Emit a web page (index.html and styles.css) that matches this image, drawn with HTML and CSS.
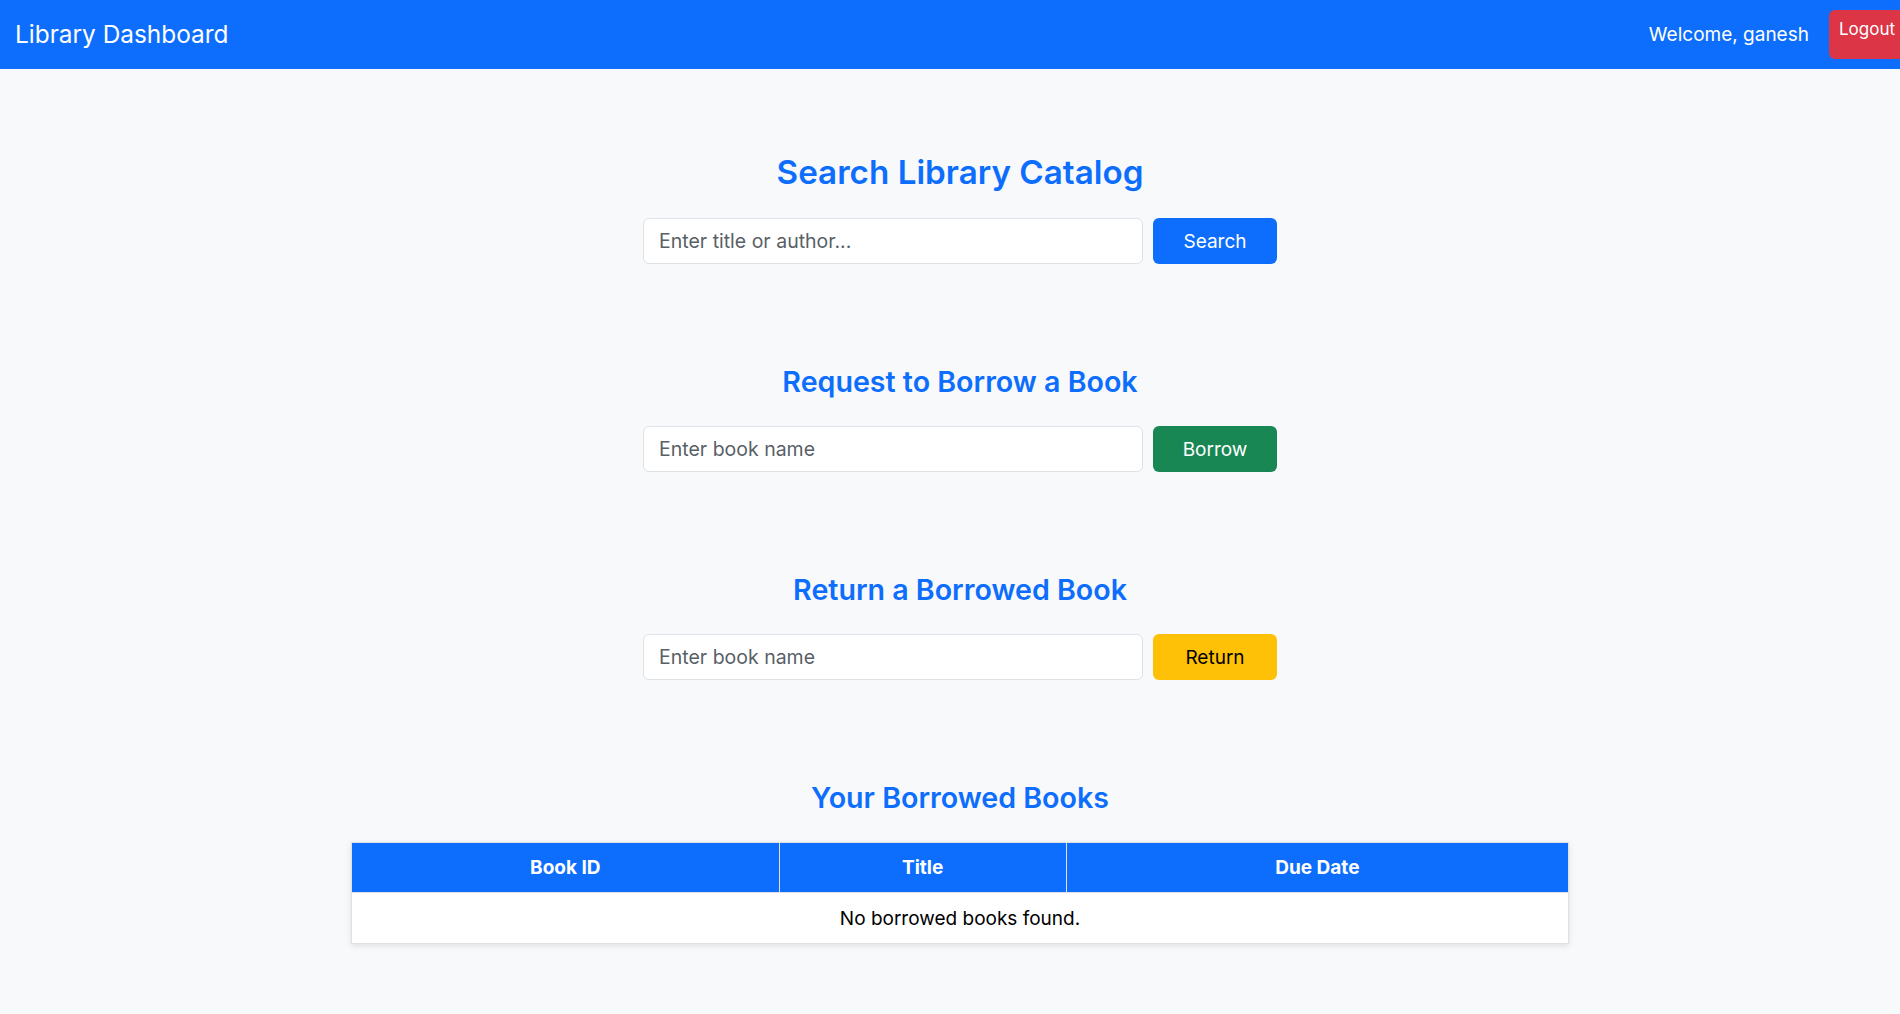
FILE: index.html
```html
<!DOCTYPE html>
<html lang="en">
<head>
<meta charset="utf-8">
<title>Library Dashboard</title>
<link rel="stylesheet" href="styles.css">
</head>
<body>
<div class="page">
  <header class="navbar">
    <div class="brand">Library Dashboard</div>
    <div class="nav-right">
      <span class="welcome">Welcome, ganesh</span>
      <a class="logout" href="#">Logout</a>
    </div>
  </header>
  <main class="main">
    <section class="section">
      <h2 class="title title-lg">Search Library Catalog</h2>
      <form class="row">
        <input class="field" type="text" placeholder="Enter title or author...">
        <button class="btn btn-blue" type="button">Search</button>
      </form>
    </section>
    <section class="section">
      <h3 class="title">Request to Borrow a Book</h3>
      <form class="row">
        <input class="field" type="text" placeholder="Enter book name">
        <button class="btn btn-green" type="button">Borrow</button>
      </form>
    </section>
    <section class="section">
      <h3 class="title">Return a Borrowed Book</h3>
      <form class="row">
        <input class="field" type="text" placeholder="Enter book name">
        <button class="btn btn-yellow" type="button">Return</button>
      </form>
    </section>
    <section class="section section-last">
      <h3 class="title">Your Borrowed Books</h3>
      <table class="books">
        <thead>
          <tr>
            <th class="c1">Book ID</th>
            <th class="c2">Title</th>
            <th class="c3">Due Date</th>
          </tr>
        </thead>
        <tbody>
          <tr>
            <td colspan="3">No borrowed books found.</td>
          </tr>
        </tbody>
      </table>
    </section>
  </main>
</div>
</body>
</html>
```

FILE: styles.css
```css
html {
  overflow-x: hidden;
}
body {
  margin: 0;
  background: #f8f9fa;
  font-family: Inter, "Noto Sans", sans-serif;
  color: #212529;
}
.page {
  width: 1920px;
}
.navbar {
  height: 69px;
  background: #0d6efd;
  display: flex;
  align-items: center;
  justify-content: space-between;
  padding: 0 15px;
  color: #fff;
}
.brand {
  font-size: 24.4px;
  font-weight: 400;
  padding-bottom: 2px;
}
.nav-right {
  display: flex;
  align-items: center;
  gap: 20px;
}
.welcome {
  font-size: 19px;
}
.logout {
  display: block;
  box-sizing: border-box;
  height: 49px;
  padding: 7px 10px 0;
  background: #dc3545;
  color: #fff;
  text-decoration: none;
  font-size: 17px;
  line-height: 24px;
  border-radius: 6px;
}
.main {
  padding-top: 84px;
  display: flex;
  flex-direction: column;
  align-items: center;
}
.section {
  display: flex;
  flex-direction: column;
  align-items: center;
  margin-bottom: 101px;
}
.section-last {
  margin-bottom: 70px;
}
.title {
  margin: 0 0 27px;
  color: #0d6efd;
  font-size: 28.6px;
  font-weight: 600;
  line-height: 34px;
}
.title-lg {
  font-size: 33.2px;
  line-height: 38px;
  margin-bottom: 27px;
}
.row {
  display: flex;
  gap: 10px;
  margin: 0;
}
.field {
  box-sizing: border-box;
  width: 500px;
  height: 46px;
  padding: 0 15px;
  border: 1px solid #dee2e6;
  border-radius: 6px;
  background: #fff;
  font-family: inherit;
  font-size: 19.5px;
  color: #212529;
}
.field::placeholder {
  color: #595f66;
}
.btn {
  box-sizing: border-box;
  width: 124px;
  height: 46px;
  border: none;
  border-radius: 6px;
  font-family: inherit;
  font-size: 19px;
  color: #fff;
}
.btn-blue {
  background: #0d6efd;
}
.btn-green {
  background: #198754;
}
.btn-yellow {
  background: #ffc107;
  color: #000;
}
.books {
  width: 1218px;
  border-collapse: collapse;
  background: #fff;
  box-shadow: 0 2px 6px rgba(0, 0, 0, 0.1);
}
.books th {
  height: 49px;
  padding: 0;
  background: #0d6efd;
  color: #fff;
  font-size: 19px;
  font-weight: 700;
  border: 1px solid #dee2e6;
}
.books .c1 { width: 428px; }
.books .c2 { width: 287px; }
.books .c3 { width: 503px; }
.books td {
  height: 50px;
  padding: 0;
  text-align: center;
  font-size: 19px;
  color: #000;
  border: 1px solid #dee2e6;
}
```
